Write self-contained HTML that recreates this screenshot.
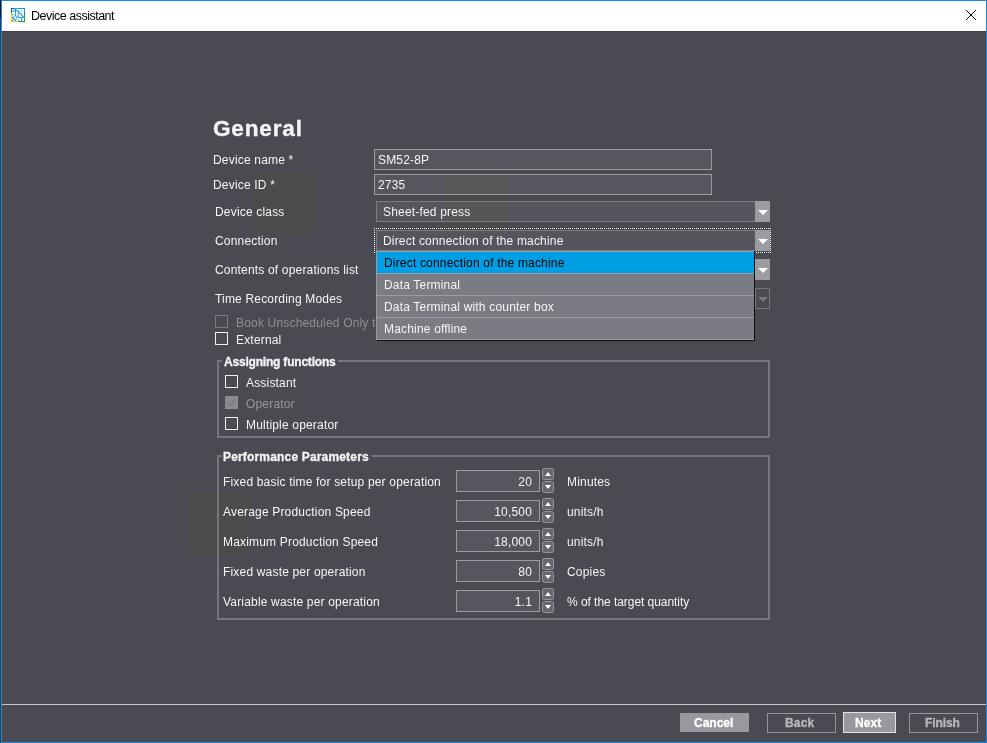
<!DOCTYPE html>
<html><head><meta charset="utf-8">
<style>
*{box-sizing:border-box;margin:0;padding:0}
html,body{width:987px;height:743px;overflow:hidden;background:#4a4a52}
body{position:relative;font-family:"Liberation Sans",sans-serif;font-size:12px;color:#f5f5f7}
.a{position:absolute}
.t{position:absolute;white-space:nowrap;line-height:14px;letter-spacing:0.18px}
.b{font-weight:bold;letter-spacing:-0.2px;-webkit-text-stroke:0.3px currentColor}
.fld{position:absolute;background:#56565e;border:1px solid #9c9ca2}
.cmb{position:absolute;background:#55555d;border-top:1px solid #7c7c82;border-bottom:1px solid #7c7c82;border-left:1px solid #7c7c82}
.arr{position:absolute;background:#9b9ba0}
.tri{position:absolute;width:0;height:0;border-left:5px solid transparent;border-right:5px solid transparent;border-top:5px solid #fff}
.chk{position:absolute;width:13px;height:13px;border:1px solid #f0f0f2}
.grp{position:absolute;border:2px solid #76767e}
.spf{position:absolute;background:#56565e;border:1px solid #9c9ca2;width:84px;height:22px}
.spb{position:absolute;width:12px;height:12px;border:1px solid #96969c;border-radius:2.5px;background:#67676e}
.btn{position:absolute;height:19px;font-weight:bold;text-align:center;line-height:17px;letter-spacing:-0.1px}
</style></head><body>
<!-- window frame -->
<div class="a" style="left:0;top:0;width:1px;height:743px;background:linear-gradient(#111 0,#111 18px,#3e3e40 18px)"></div>
<div class="a" style="left:1px;top:0;width:986px;height:743px;border:1px solid #168ae6;border-top:1px solid #168ae6"></div>
<!-- title bar -->
<div class="a" style="left:2px;top:1px;width:984px;height:30px;background:#fff"></div>
<div class="a" style="left:2px;top:31px;width:984px;height:1px;background:#404048"></div>
<svg class="a" style="left:8px;top:5px" width="20" height="20" viewBox="0 0 20 20">
<g fill="none" stroke-width="1.1">
<path d="M3 3.5 H6.7" stroke="#0d5c9e"/><path d="M6.7 3.5 H17" stroke="#1b9be8"/>
<path d="M3.5 3 V6" stroke="#0d5c9e"/><path d="M3.5 6 V7.8" stroke="#0d4a2a"/><path d="M3.5 7.8 V17" stroke="#f5c416"/>
<path d="M3 16.5 H10.8" stroke="#f5c416"/><path d="M10.8 16.5 H11.8" stroke="#0c5a2a"/><path d="M11.8 16.5 H17" stroke="#17a03c"/>
<path d="M16.5 3 V7.8" stroke="#1b9be8"/><path d="M16.5 7.8 V9.7" stroke="#0d4a2a"/><path d="M16.5 9.7 V17" stroke="#17a03c"/>
</g>
<g fill="none" stroke="#1fa2ec" stroke-width="1">
<path d="M4.6 6.4 Q7.5 4.6 10.5 6.3 L15.6 12.4" stroke-width="1.2"/>
<path d="M7.5 4 V10.8"/>
<path d="M10.2 7 V12.5"/>
<path d="M9.5 12.4 H16"/>
<path d="M13.5 12.4 V16"/>
<circle cx="7.3" cy="12.6" r="1.8"/>
<path d="M4.5 9.5 h0.1 M4.5 12.5 h0.1 M4.5 15.4 h0.1 M7.5 15.4 h0.1 M10.5 15.4 h0.1 M5.4 13.8 L6.2 14.6" stroke-width="1.3" stroke-linecap="round"/>
<path d="M13.5 6.3 h0.1" stroke-width="1" stroke-linecap="round"/>
</g>
</svg>
<div class="t" style="left:31px;top:9px;color:#000;font-size:12.5px;letter-spacing:-0.5px">Device assistant</div>
<svg class="a" style="left:965px;top:9px" width="12" height="12" viewBox="0 0 12 12"><path d="M1 1 L11 11 M11 1 L1 11" stroke="#000" stroke-width="1"/></svg>

<!-- General -->
<div class="t b" style="left:213px;top:116px;font-size:22.6px;line-height:26px;letter-spacing:0.8px">General</div>

<div class="t" style="left:213px;top:153px">Device name *</div>
<div class="fld" style="left:374px;top:149px;width:338px;height:21px"></div>
<div class="t" style="left:378px;top:153px">SM52-8P</div>

<div class="t" style="left:213px;top:178px">Device ID *</div>
<div class="fld" style="left:374px;top:174px;width:338px;height:21px"></div>
<div class="t" style="left:378px;top:178px">2735</div>

<!-- Device class -->
<div class="t" style="left:215px;top:205px">Device class</div>
<div class="cmb" style="left:376px;top:201px;width:379px;height:21px"></div>
<div class="arr" style="left:755px;top:201px;width:15px;height:21px"></div>
<div class="tri" style="left:758px;top:210px"></div>
<div class="t" style="left:383px;top:205px">Sheet-fed press</div>

<!-- Connection -->
<div class="t" style="left:215px;top:234px">Connection</div>
<div class="cmb" style="left:376px;top:230px;width:379px;height:21px"></div>
<div class="arr" style="left:755px;top:230px;width:15px;height:21px"></div>
<div class="tri" style="left:758px;top:239px"></div>
<div class="t" style="left:383px;top:234px">Direct connection of the machine</div>
<div class="a" style="left:374px;top:228px;width:397px;height:25px;border:1px dotted #fff"></div>

<!-- Contents -->
<div class="t" style="left:215px;top:263px">Contents of operations list</div>
<div class="cmb" style="left:376px;top:259px;width:379px;height:21px"></div>
<div class="arr" style="left:755px;top:259px;width:15px;height:21px"></div>
<div class="tri" style="left:758px;top:268px"></div>

<!-- Time recording -->
<div class="t" style="left:215px;top:292px">Time Recording Modes</div>
<div class="a" style="left:755px;top:288px;width:15px;height:21px;border:1px solid #77777e"></div>
<div class="tri" style="left:758px;top:297px;border-top-color:#77777e"></div>

<!-- checkboxes -->
<div class="chk" style="left:215px;top:315px;border-color:#7a7a80"></div>
<div class="t" style="left:236px;top:316px;color:#8e8e94">Book Unscheduled Only to</div>
<div class="chk" style="left:215px;top:332px"></div>
<div class="t" style="left:236px;top:333px">External</div>

<!-- dropdown list -->
<div class="a" style="left:376px;top:251px;width:379px;height:90px;background:#7b7c83;border-left:1px solid #9e9aa0;border-right:1px solid #111;border-bottom:1px solid #111"></div>
<div class="a" style="left:377px;top:339px;width:377px;height:1px;background:#9c9ca2"></div>
<div class="a" style="left:376px;top:251px;width:378px;height:1px;background:#a39c9c"></div>
<div class="a" style="left:377px;top:252px;width:377px;height:21px;background:#009fe3"></div>
<div class="a" style="left:376px;top:273px;width:378px;height:1px;background:#9b9ca2"></div>
<div class="a" style="left:376px;top:295px;width:378px;height:1px;background:#9b9ca2"></div>
<div class="a" style="left:376px;top:317px;width:378px;height:1px;background:#9b9ca2"></div>
<div class="t" style="left:384px;top:256px;color:#000">Direct connection of the machine</div>
<div class="t" style="left:384px;top:278px">Data Terminal</div>
<div class="t" style="left:384px;top:300px">Data Terminal with counter box</div>
<div class="t" style="left:384px;top:322px">Machine offline</div>

<!-- Assigning functions -->
<div class="grp" style="left:217px;top:360px;width:553px;height:78px"></div>
<div class="a" style="left:222px;top:354px;width:116px;height:14px;background:#4a4a52"></div>
<div class="t b" style="left:224px;top:355px">Assigning functions</div>
<div class="chk" style="left:225px;top:375px"></div>
<div class="t" style="left:246px;top:376px">Assistant</div>
<div class="chk" style="left:225px;top:396px;background:#8b8b91;border-color:#8b8b91"></div>
<svg class="a" style="left:225px;top:396px" width="13" height="13" viewBox="0 0 13 13"><path d="M2.7 7.2 L5.5 9.8 L10 2.8" stroke="#68686e" stroke-width="1" fill="none"/></svg>
<div class="t" style="left:246px;top:397px;color:#97979c">Operator</div>
<div class="chk" style="left:225px;top:417px"></div>
<div class="t" style="left:246px;top:418px">Multiple operator</div>

<!-- Performance Parameters -->
<div class="grp" style="left:217px;top:455px;width:553px;height:165px"></div>
<div class="a" style="left:222px;top:449px;width:150px;height:14px;background:#4a4a52"></div>
<div class="t b" style="left:223px;top:450px;letter-spacing:0.17px">Performance Parameters</div>
<div class="t" style="left:223px;top:475px">Fixed basic time for setup per operation</div>
<div class="spf" style="left:456px;top:470px"></div>
<div class="t" style="left:456px;top:475px;width:76px;text-align:right">20</div>
<div class="spb" style="left:542px;top:468px"></div>
<div class="tri" style="left:545px;top:472px;border-width:0 3px 4px 3px;border-bottom:4px solid #fff;border-top:0"></div>
<div class="spb" style="left:542px;top:481px"></div>
<div class="tri" style="left:545px;top:485px;border-width:4px 3px 0 3px"></div>
<div class="t" style="left:567px;top:475px">Minutes</div>
<div class="t" style="left:223px;top:505px">Average Production Speed</div>
<div class="spf" style="left:456px;top:500px"></div>
<div class="t" style="left:456px;top:505px;width:76px;text-align:right">10,500</div>
<div class="spb" style="left:542px;top:498px"></div>
<div class="tri" style="left:545px;top:502px;border-width:0 3px 4px 3px;border-bottom:4px solid #fff;border-top:0"></div>
<div class="spb" style="left:542px;top:511px"></div>
<div class="tri" style="left:545px;top:515px;border-width:4px 3px 0 3px"></div>
<div class="t" style="left:567px;top:505px">units/h</div>
<div class="t" style="left:223px;top:535px">Maximum Production Speed</div>
<div class="spf" style="left:456px;top:530px"></div>
<div class="t" style="left:456px;top:535px;width:76px;text-align:right">18,000</div>
<div class="spb" style="left:542px;top:528px"></div>
<div class="tri" style="left:545px;top:532px;border-width:0 3px 4px 3px;border-bottom:4px solid #fff;border-top:0"></div>
<div class="spb" style="left:542px;top:541px"></div>
<div class="tri" style="left:545px;top:545px;border-width:4px 3px 0 3px"></div>
<div class="t" style="left:567px;top:535px">units/h</div>
<div class="t" style="left:223px;top:565px">Fixed waste per operation</div>
<div class="spf" style="left:456px;top:560px"></div>
<div class="t" style="left:456px;top:565px;width:76px;text-align:right">80</div>
<div class="spb" style="left:542px;top:558px"></div>
<div class="tri" style="left:545px;top:562px;border-width:0 3px 4px 3px;border-bottom:4px solid #fff;border-top:0"></div>
<div class="spb" style="left:542px;top:571px"></div>
<div class="tri" style="left:545px;top:575px;border-width:4px 3px 0 3px"></div>
<div class="t" style="left:567px;top:565px">Copies</div>
<div class="t" style="left:223px;top:595px">Variable waste per operation</div>
<div class="spf" style="left:456px;top:590px"></div>
<div class="t" style="left:456px;top:595px;width:76px;text-align:right">1.1</div>
<div class="spb" style="left:542px;top:588px"></div>
<div class="tri" style="left:545px;top:592px;border-width:0 3px 4px 3px;border-bottom:4px solid #fff;border-top:0"></div>
<div class="spb" style="left:542px;top:601px"></div>
<div class="tri" style="left:545px;top:605px;border-width:4px 3px 0 3px"></div>
<div class="t" style="left:567px;top:595px;letter-spacing:-0.05px">% of the target quantity</div>

<!-- footer -->
<div class="a" style="left:2px;top:704px;width:984px;height:1px;background:#c6c4ce"></div>
<div class="a" style="left:680px;top:713px;width:69px;height:19px;background:#98989e"></div>
<div class="t b" style="left:694px;top:716px;color:#fff;letter-spacing:0px">Cancel</div>
<div class="a" style="left:767px;top:713px;width:69px;height:20px;border:1px solid #95959b"></div>
<div class="t b" style="left:785px;top:716px;color:#b9b9be;letter-spacing:0.2px">Back</div>
<div class="a" style="left:843px;top:712px;width:53px;height:21px;background:#98989e;border:1px solid #e4e4e6"></div>
<div class="t b" style="left:855px;top:716px;color:#fff;letter-spacing:0.1px">Next</div>
<div class="a" style="left:909px;top:713px;width:69px;height:20px;border:1px solid #95959b"></div>
<div class="t b" style="left:925px;top:716px;color:#b9b9be;letter-spacing:-0.1px">Finish</div>
<!-- ghost boxes -->
<div class="a" style="left:251px;top:171px;width:64px;height:64px;background:#808080;mix-blend-mode:saturation;opacity:0.9"></div>
<div class="a" style="left:443px;top:171px;width:64px;height:64px;background:#808080;mix-blend-mode:saturation;opacity:0.9"></div>
<div class="a" style="left:187px;top:491px;width:64px;height:64px;background:#808080;mix-blend-mode:saturation;opacity:0.9"></div>
</body></html>
